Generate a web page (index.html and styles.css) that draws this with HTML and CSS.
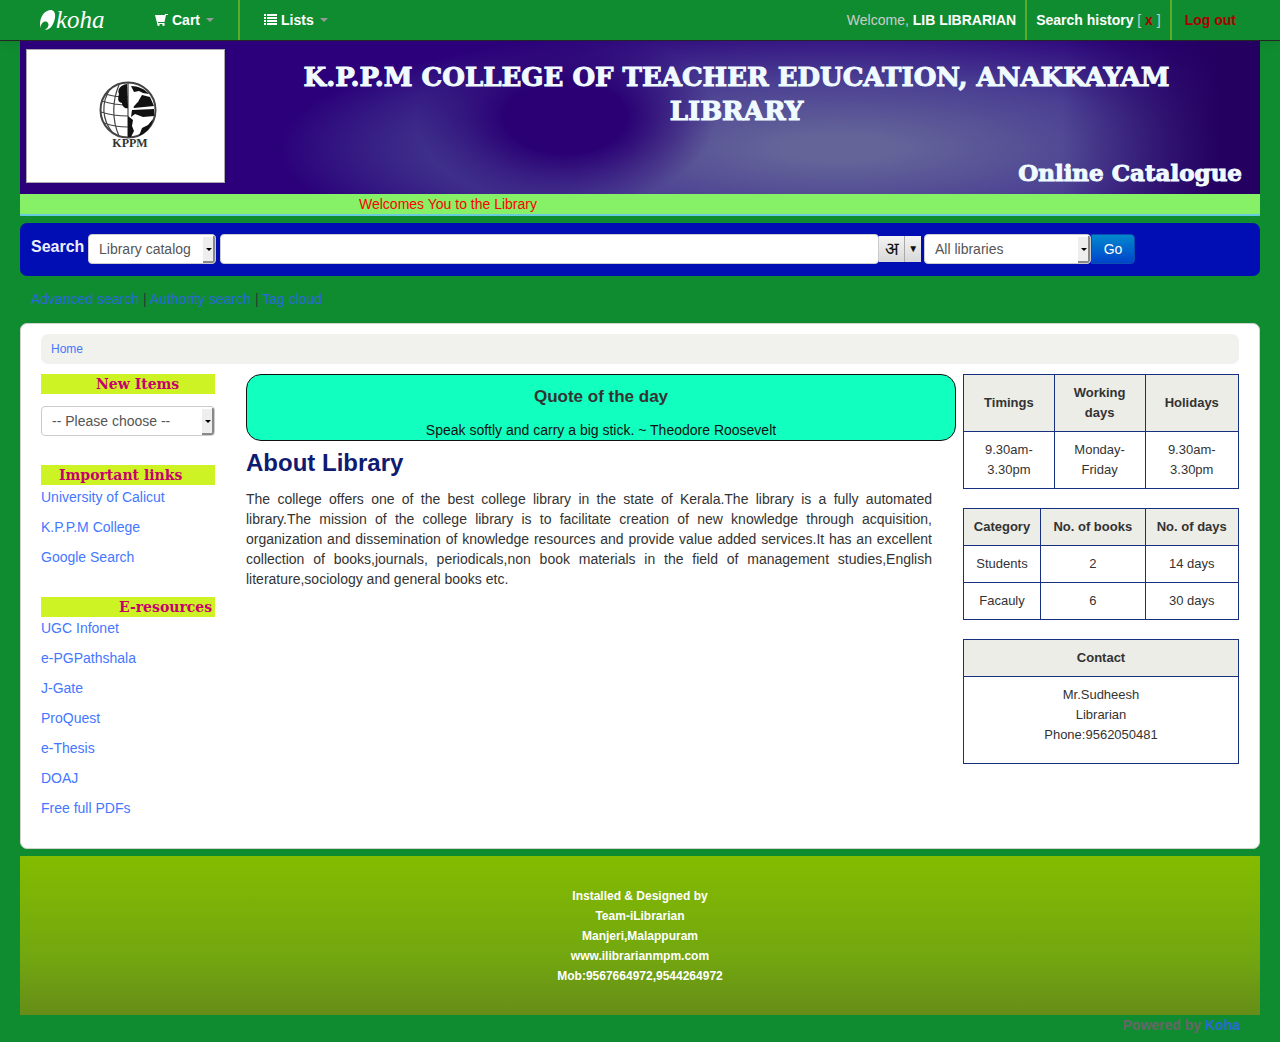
FILE: index.html
```html
<!DOCTYPE html>
<html lang="en">
<head>
<meta charset="utf-8">
<title>Koha online catalog</title>
<meta name="viewport" content="width=device-width, initial-scale=1">
<link rel="stylesheet" href="styles.css">
</head>
<body>
<nav class="navbar">
  <a class="brand" href="#" aria-label="Koha home">
    <svg class="brand-leaf" width="17" height="22" viewBox="0 0 17 22" aria-hidden="true"><path d="M1.500 19C-.5 11 4 1.500 11.500 1c4.500 0 5.500 5 4 10-1.200 5-4.500 9.500-8.500 9.800-.8 0-1-.4-.3-.8 3-1.500 3.800-5.500 1.300-7C5 11.500 1.800 14.500 1.500 19z" fill="#fff"/></svg>
    <span>koha</span>
  </a>
  <a class="nav-item nav-cart" href="#">
    <svg width="13" height="12" viewBox="0 0 13 12" aria-hidden="true"><path d="M0 1h9.500L10.300 0H13v1h-2L9.500 8H3v1h6.500v1H2V8.500L1.500 7z" fill="#fff"/><circle cx="3.500" cy="10.800" r="1.200" fill="#fff"/><circle cx="8.500" cy="10.800" r="1.200" fill="#fff"/></svg>
    Cart <span class="caret"></span>
  </a>
  <a class="nav-item nav-lists" href="#">
    <svg width="13" height="12" viewBox="0 0 13 12" aria-hidden="true"><path d="M0 0h2v2H0zM3 0h10v2H3zM0 3h2v2H0zM3 3h10v2H3zM0 6h2v2H0zM3 6h10v2H3zM0 9h2v2H0zM3 9h10v2H3z" fill="#fff"/></svg>
    Lists <span class="caret"></span>
  </a>
  <div class="nav-user">
    <span class="nav-cell">Welcome, <a href="#">LIB LIBRARIAN</a></span>
    <span class="nav-cell"><a href="#">Search history</a> [ <a class="danger" href="#">x</a> ]</span>
    <span class="nav-cell nav-logout"><a class="danger" href="#">Log out</a></span>
  </div>
</nav>

<div class="wrapper">
  <header class="banner">
    <div class="crest">
      <svg width="64" height="70" viewBox="0 0 64 70" role="img" aria-label="KPPM">
        <g fill="none" stroke="#444" stroke-width="1.200">
          <circle cx="32" cy="29" r="27.500" stroke-width="2" fill="#fff"/>
          <path d="M32 2v54M14 8c-9 14-8 30 2 43M23 4c-7 16-7 35 0 51M6 20c9 3 17 4 26 4M5 31c9 3 18 4 27 4M8 42c8 3 16 4 24 4M10 13c7 3 14 3 22 3"/>
        </g>
        <path d="M31 3c-7 1-10 6-8 10-1 4-2 8 3 9 0 4 4 6 6 5zM35 5c7 0 14 3 18 8l-6-1-4-2-5 1zM46 14l8 2 4 9-20 2c-2-1 4-5 5-8zM36 29l22-1v7l-11 1-8-3-4 3zM32 35l5 4-1 6 2 5-3 6h-3zM57 38c-1 8-7 14-14 17l3-8 6-3z" fill="#111"/>
        <text x="34" y="66" text-anchor="middle" class="crest-name">KPPM</text>
      </svg>
    </div>
    <div class="banner-text">
      <h1>K.P.P.M COLLEGE OF TEACHER EDUCATION, ANAKKAYAM<br>LIBRARY</h1>
      <p>Online Catalogue</p>
    </div>
  </header>
  <div class="ticker">Welcomes You to the Library</div>

  <form class="searchbar">
    <label for="q">Search</label>
    <select class="select search-index" aria-label="Search in"><option>Library catalog</option></select>
    <input id="q" class="search-input" type="text">
    <span class="ime"><button type="button" lang="hi">अ</button><button type="button" class="ime-more" aria-label="Keyboard options">▼</button></span>
    <select class="select search-branch" aria-label="Library"><option>All libraries</option></select>
    <button class="go" type="button">Go</button>
  </form>
  <div class="more-searches"><a href="#">Advanced search</a> | <a href="#">Authority search</a> | <a href="#">Tag cloud</a></div>

  <main class="main">
    <div class="breadcrumb"><a href="#">Home</a></div>
    <div class="columns">
      <aside class="links">
        <h2 class="bar bar-new">New Items</h2>
        <select class="select select-new" aria-label="New items"><option>-- Please choose --</option></select>
        <h2 class="bar bar-important">Important links</h2>
        <ul>
          <li><a href="#">University of Calicut</a></li>
          <li><a href="#">K.P.P.M College</a></li>
          <li><a href="#">Google Search</a></li>
        </ul>
        <h2 class="bar bar-eres">E-resources</h2>
        <ul>
          <li><a href="#">UGC Infonet</a></li>
          <li><a href="#">e-PGPathshala</a></li>
          <li><a href="#">J-Gate</a></li>
          <li><a href="#">ProQuest</a></li>
          <li><a href="#">e-Thesis</a></li>
          <li><a href="#">DOAJ</a></li>
          <li><a href="#">Free full PDFs</a></li>
        </ul>
      </aside>
      <section class="content">
        <div class="quote">
          <h3>Quote of the day</h3>
          <p>Speak softly and carry a big stick. ~ Theodore Roosevelt</p>
        </div>
        <h2>About Library</h2>
        <p class="about">The college offers one of the best college library in the state of Kerala.The library is a fully automated library.The mission of the college library is to facilitate creation of new knowledge through acquisition, organization and dissemination of knowledge resources and provide value added services.It has an excellent collection of books,journals, periodicals,non book materials in the field of management studies,English literature,sociology and general books etc.</p>
      </section>
      <aside class="info">
        <table>
          <colgroup><col class="third"><col class="third"><col></colgroup>
          <thead><tr><th>Timings</th><th>Working days</th><th>Holidays</th></tr></thead>
          <tbody><tr><td>9.30am-<br>3.30pm</td><td>Monday-<br>Friday</td><td>9.30am-<br>3.30pm</td></tr></tbody>
        </table>
        <table>
          <colgroup><col class="category"><col class="books"><col></colgroup>
          <thead><tr><th>Category</th><th>No. of books</th><th>No. of days</th></tr></thead>
          <tbody>
            <tr><td>Students</td><td>2</td><td>14 days</td></tr>
            <tr><td>Facauly</td><td>6</td><td>30 days</td></tr>
          </tbody>
        </table>
        <table>
          <thead><tr><th>Contact</th></tr></thead>
          <tbody><tr><td><p>Mr.Sudheesh<br>Librarian<br>Phone:9562050481</p></td></tr></tbody>
        </table>
      </aside>
    </div>
  </main>

  <footer class="credits">
    Installed &amp; Designed by<br>Team-iLibrarian<br>Manjeri,Malappuram<br>www.ilibrarianmpm.com<br>Mob:9567664972,9544264972
  </footer>
  <div class="powered">Powered by <a href="#">Koha</a></div>
</div>
</body>
</html>
```
FILE: styles.css
```css
* { box-sizing: border-box; }

body {
  margin: 0;
  background: #108c30;
  color: #333;
  font: 14px/20px "Liberation Sans", Arial, sans-serif;
}

a { color: #4477ff; text-decoration: none; }
h1, h2, h3, p, ul { margin: 0; padding: 0; }
ul { list-style: none; }
button, input, select { font: inherit; margin: 0; }

/* Navigation */
.navbar {
  display: flex;
  align-items: center;
  height: 41px;
  padding: 0 35px 0 39px;
  border-bottom: 1px solid #252525;
  box-shadow: 0 1px 10px rgba(0, 0, 0, .1);
  color: #ccc;
}
.navbar a { color: #fff; font-weight: bold; }
.navbar .brand {
  display: flex;
  align-items: center;
  width: 101px;
  font: italic 25px/40px "Liberation Serif", serif;
}
.nav-item {
  display: flex;
  align-items: center;
  gap: 4px;
  height: 40px;
  padding: 0 24px 0 15px;
}
.nav-cart { border-right: 2px solid #5bab2c; }
.nav-lists { padding-left: 24px; }
.caret {
  margin-left: 2px;
  border: 4px solid transparent;
  border-top-color: #999;
  border-bottom: 0;
}
.nav-user { display: flex; margin-left: auto; line-height: 40px; }
.nav-cell { padding: 0 9px; white-space: nowrap; }
.nav-cell + .nav-cell { border-left: 2px solid #5bab2c; }
.nav-logout { padding-left: 13px; }
.navbar .danger { color: #a00; }

.wrapper { padding: 0 20px 7px; }

/* Banner */
.banner {
  display: flex;
  gap: 6px;
  height: 153px;
  padding: 8px 18px 11px 6px;
  background:
    radial-gradient(ellipse 150px 90px at 44% 50%, #2a0074 40%, rgba(42, 0, 116, 0) 100%),
    linear-gradient(90deg, rgba(36, 0, 96, 0) 84%, #240060 97%),
    radial-gradient(ellipse 560px 130px at 66% 70%, #646499 10%, rgba(80, 76, 152, .8) 55%, rgba(60, 40, 140, 0) 100%),
    radial-gradient(ellipse 200px 90px at 37% 70%, #2e1c80, rgba(46, 28, 128, 0)),
    #2b007a;
}
.crest {
  display: flex;
  flex: none;
  align-items: center;
  justify-content: center;
  width: 199px;
  padding-left: 4px;
  border: 1px solid #aaa;
  background: #fff;
}
.crest-name { font: bold 12px "Liberation Serif", serif; fill: #333; }
.banner-text {
  display: flex;
  flex: 1;
  flex-direction: column;
  justify-content: space-between;
  padding-top: 11px;
  color: #f0fbff;
  text-align: center;
  -webkit-text-stroke: 1px #f0fbff;
}
.banner-text h1 { font: bold 26px/34px "DejaVu Serif", serif; }
.banner-text p { font: bold 23px/20px "DejaVu Serif", serif; text-align: right; }

.ticker {
  padding-left: 339px;
  border-bottom: 2px solid #66ccdd;
  background: #86f166;
  color: #f00;
}

/* Search */
.searchbar {
  display: flex;
  align-items: center;
  margin-top: 7px;
  padding: 11px 125px 12px 11px;
  border-radius: 7px;
  background: #000eb4;
}
.searchbar label { width: 57px; padding-bottom: 4px; color: #eef; font-size: 16px; font-weight: bold; }
.select {
  height: 30px;
  padding: 4px 10px;
  appearance: none;
  border: 1px solid #ccc;
  border-radius: 4px;
  background: #fff url("data:image/svg+xml,%3Csvg xmlns='http://www.w3.org/2000/svg' width='12' height='28'%3E%3Cpath fill='%23eee' d='M0 2h12v26H0z'/%3E%3Cpath fill='%23888' d='M10 1h2v27H0v-2h10z'/%3E%3Cpath d='M3 13h6l-3 3z'/%3E%3C/svg%3E") no-repeat right center;
  color: #555;
}
.search-index { width: 128px; margin-right: 4px; }
.search-input {
  flex: 1;
  min-width: 80px;
  height: 30px;
  padding: 4px 6px;
  border: 1px solid #ccc;
  border-radius: 4px;
}
.ime { display: flex; width: 42px; height: 26px; margin-right: 3px; }
.ime button {
  flex: 26;
  padding: 0;
  border: 0;
  background: linear-gradient(#f4f4f4, #d8d8d8);
  color: #111;
  font-size: 18px;
  line-height: 24px;
}
.ime .ime-more {
  flex: 16;
  border-left: 1px solid #aaa;
  font-size: 10px;
}
.search-branch { width: 167px; }
.go {
  width: 44px;
  height: 30px;
  padding: 0;
  border: 1px solid #0a4fb0;
  border-radius: 0 4px 4px 0;
  background: linear-gradient(#0088cc, #0044cc);
  color: #fff;
}
.more-searches { padding: 13px 11px 14px; }
.more-searches a { color: #2a68d8; }

/* Main panel */
.main {
  padding: 10px 20px 20px;
  border: 1px solid #d2d2cf;
  border-radius: 7px;
  background: #fff;
}
.breadcrumb {
  margin-bottom: 10px;
  padding: 5px 10px;
  border-radius: 7px;
  background: #f1f2ed;
  font-size: 12px;
}
.columns { display: grid; grid-template-columns: 174px 1fr 276px; }

.bar {
  background: #cdf325;
  color: #c7006e;
  font: bold 14px/20px "DejaVu Serif", serif;
  margin-bottom: 2px;
}
.bar-new { margin-bottom: 12px; padding-left: 55px; }
.bar-important { padding-left: 18px; }
.bar-eres { margin-bottom: 1px; padding-left: 78px; }
.select-new { display: block; width: 100%; margin-bottom: 29px; }
.links li { margin-bottom: 10px; }
.links ul + .bar { margin-top: 30px; }

.content { padding: 0 7px 0 31px; }
.quote {
  padding: 12px 0 0;
  border: 1px solid #111;
  border-radius: 15px;
  background: #11ffbf;
  color: #111;
  text-align: center;
}
.quote h3 { margin-bottom: 13px; color: #333; font-size: 17px; line-height: 20px; }
.content h2 { margin: 2px 0 6px; color: #0f1b70; font-size: 24px; line-height: 40px; }
.about { padding-right: 24px; text-align: justify; }

.info table {
  width: 100%;
  margin-bottom: 19px;
  border-collapse: collapse;
  table-layout: fixed;
  font-size: 13px;
  text-align: center;
}
.info th, .info td { padding: 8px; border: 1px solid #16307f; }
.info th { background: #ecede6; }
.info td p { margin-bottom: 10px; }
.third { width: 33%; }
.category { width: 28%; }
.books { width: 38%; }

/* Footer */
.credits {
  margin-top: 7px;
  padding: 30px 0 29px;
  background: linear-gradient(#84bc00, #72a610 65%, #668d18);
  color: #fff;
  font-size: 12px;
  font-weight: bold;
  text-align: center;
}
.powered { padding-right: 20px; color: #666; font-weight: bold; text-align: right; }
.powered a { color: #2a68d8; }
```
